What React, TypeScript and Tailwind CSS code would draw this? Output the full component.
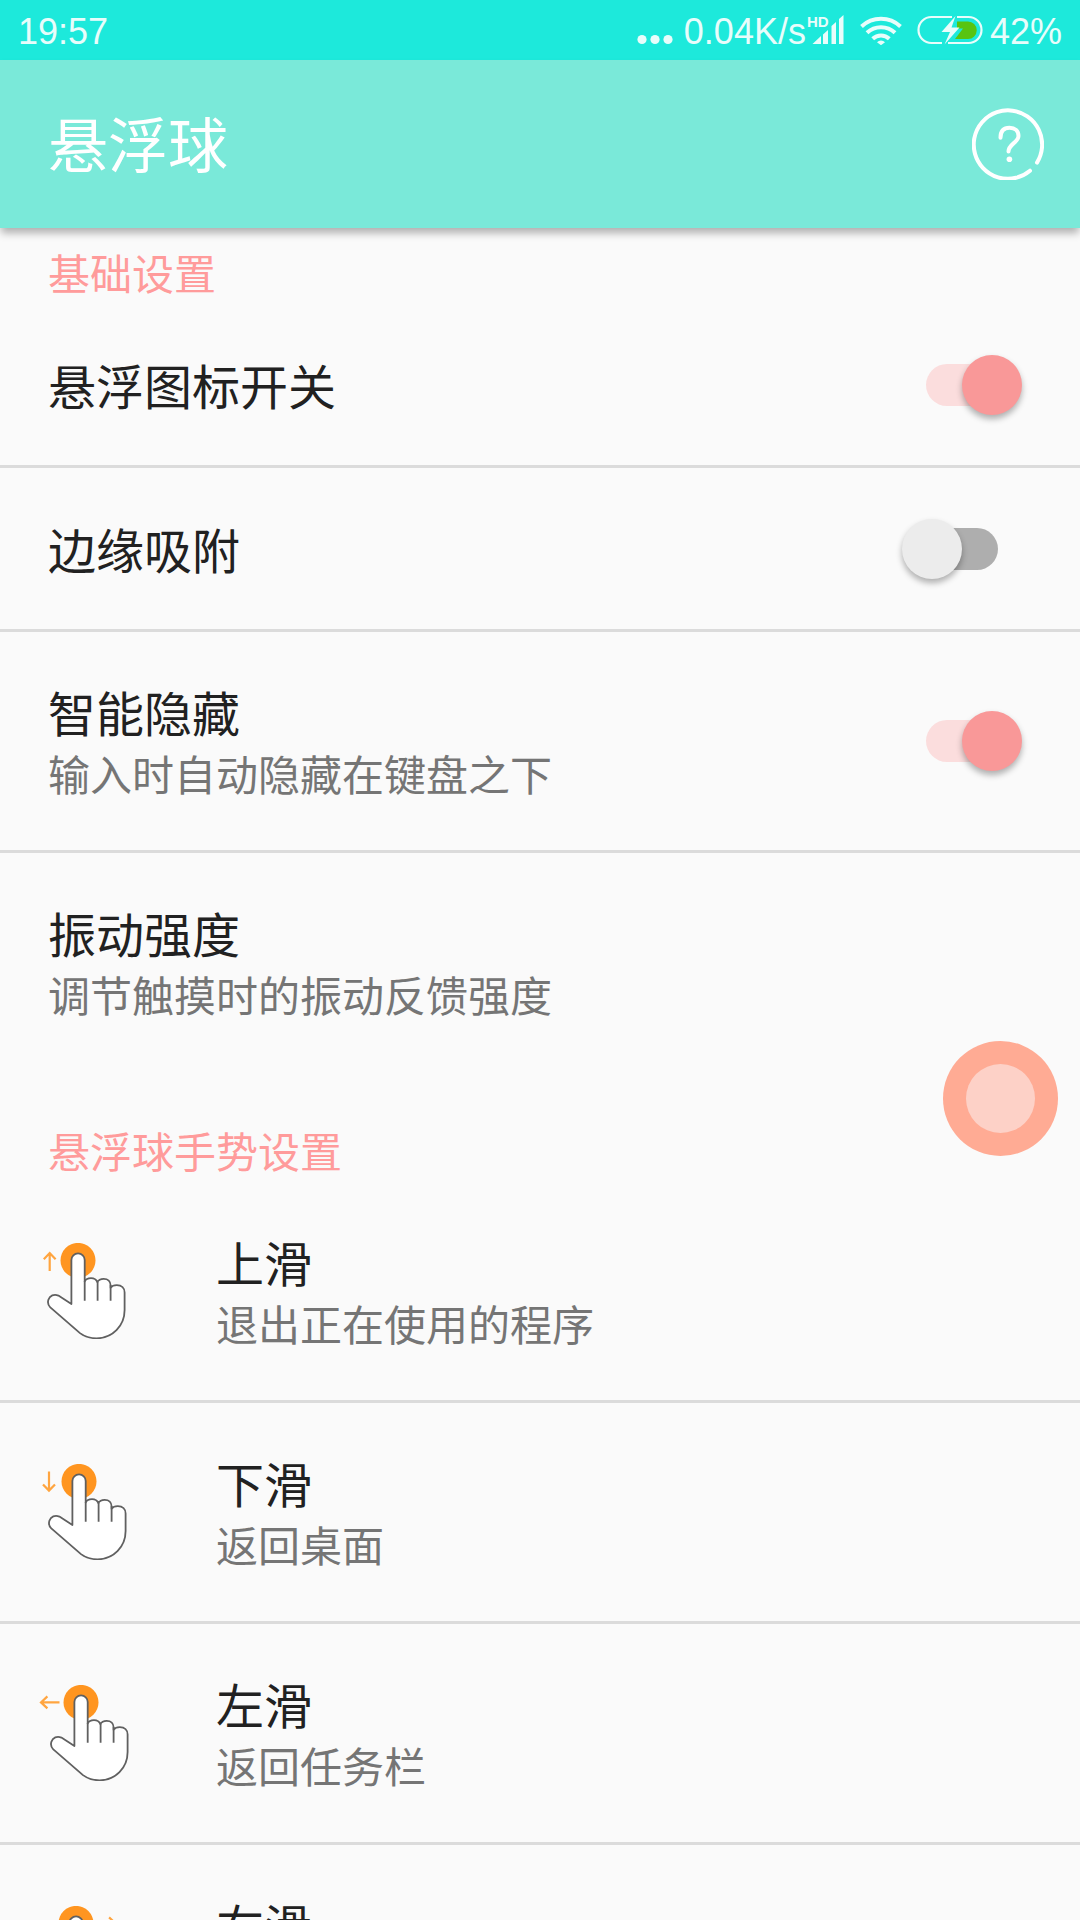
import { useState } from "react";
import clsx from "clsx";

type Direction = "up" | "down" | "left" | "right";

interface ToggleSetting {
  id: string;
  title: string;
  summary?: string;
  enabled: boolean;
}

interface Gesture {
  direction: Direction;
  title: string;
  summary: string;
}

const TOGGLES: ToggleSetting[] = [
  { id: "floating-icon", title: "悬浮图标开关", enabled: true },
  { id: "edge-snap", title: "边缘吸附", enabled: false },
  { id: "smart-hide", title: "智能隐藏", summary: "输入时自动隐藏在键盘之下", enabled: true },
];

const GESTURES: Gesture[] = [
  { direction: "up", title: "上滑", summary: "退出正在使用的程序" },
  { direction: "down", title: "下滑", summary: "返回桌面" },
  { direction: "left", title: "左滑", summary: "返回任务栏" },
  { direction: "right", title: "右滑", summary: "打开通知栏" },
];

// The hand shifts a little so that the arrow always has room beside it.
const HAND_SHIFT: Record<Direction, number> = { up: 0, down: 1, left: 3, right: -2 };

const ARROWS: Record<Direction, string> = {
  up: "M13.7 28V10M7.8 16.2l5.9-6.2 5.9 6.2",
  down: "M13 7.5V26.5M7 20.4l6 6.2 6-6.2",
  left: "M23.5 17.4H5M11.4 11.4L5 17.4l6.4 6",
  right: "M61 17.4H79.5M73.1 11.4l6.4 6-6.4 6",
};

function GestureIcon({ direction }: { direction: Direction }) {
  return (
    <svg viewBox="0 0 96 96" className="size-24 shrink-0" fill="none" aria-hidden="true">
      <g transform={`translate(${HAND_SHIFT[direction]} 0)`}>
        <circle cx="42" cy="17.4" r="17.5" fill="#ff9520" />
        <g stroke="#606060" strokeWidth="1.8">
          <path
            d="M35.4 61V17a6.65 6.65 0 0 1 13.3 0v21.5c1-2.2 3.4-3.4 6.3-3.4 3.2 0 5.4 1.6 6.4 4 1-2.1 3.2-3.3 6.3-3.3 4.2 0 6.9 2.7 6.9 6.8v2.2c1.2-1.7 3.5-2.6 6.2-2.6 4.8 0 7.8 2.8 7.8 7.4V67c0 16-12.3 28.3-28 28.3-6.2 0-12-1.8-16.6-5.2L14.3 64.4c-2.2-2.2-2.8-4.8-1.9-7.6 1.4-4.2 5.6-6 10-4.2L35.4 61z"
            fill="#fff"
            strokeLinejoin="round"
          />
          <path d="M48.7 38v19.8M61.6 39v18.8M74.6 42v15.8" />
        </g>
      </g>
      <path d={ARROWS[direction]} stroke="#ffa540" strokeWidth="2.2" />
    </svg>
  );
}

function SignalIcon() {
  return (
    <div className="relative ml-px h-8 w-[38px]">
      <span className="absolute top-0 left-0 text-[15px] leading-none font-bold">HD</span>
      <svg viewBox="0 0 38 32" className="h-8 w-[38px]" fill="currentColor" aria-hidden="true">
        <path d="M5.5 30L14 22v8zM16 20.5l5-4.5v14h-5zM24.5 12l4.5-4v22h-4.5zM32 5l4.5-4v29H32z" />
      </svg>
    </div>
  );
}

function WifiIcon() {
  return (
    <svg viewBox="0 0 42 30" className="h-[30px] w-[42px]" fill="none" aria-hidden="true">
      <g stroke="currentColor" strokeWidth="4">
        <path d="M1.5 11.5a28.5 28.5 0 0 1 39 0" />
        <path d="M7 17.8a20.3 20.3 0 0 1 28 0" />
        <path d="M12.7 23.8a12 12 0 0 1 16.6 0" />
      </g>
      <path d="M17 27.2a5.6 5.6 0 0 1 8 0L21 30.2z" fill="currentColor" />
    </svg>
  );
}

function BatteryIcon() {
  return (
    <svg viewBox="0 0 66 30" className="h-[30px] w-[66px]" fill="none" aria-hidden="true">
      <path
        d="M35 2H14.5a13 13 0 0 0 0 26H25M40 2h11.5a13 13 0 0 1 0 26H31"
        stroke="currentColor"
        strokeWidth="2.2"
      />
      <path d="M40 6.5h11a8.5 8.5 0 0 1 0 17.5H38l8-10.5h-6z" fill="#58c411" />
      <path d="M38.5 1L24.5 17h8.5L27.5 29.5 42.5 12.5h-8z" fill="currentColor" />
    </svg>
  );
}

function StatusBar() {
  return (
    <div className="flex h-[60px] shrink-0 items-center justify-between bg-[#1de9db] px-[18px] font-['Liberation_Sans',sans-serif] text-[36px] leading-none text-[#e8fdfb]">
      <span className="pt-[3px]">19:57</span>
      <div className="flex items-center">
        <svg viewBox="0 0 36 30" className="mr-[11px] h-[30px] w-9" fill="currentColor" aria-hidden="true">
          <circle cx="5" cy="24.5" r="4.6" />
          <circle cx="18" cy="24.5" r="4.6" />
          <circle cx="31" cy="24.5" r="4.6" />
        </svg>
        <span className="pt-[3px]">0.04K/s</span>
        <SignalIcon />
        <div className="mr-[7px] ml-[15px] flex gap-[15px]">
          <WifiIcon />
          <BatteryIcon />
        </div>
        <span className="pt-[3px]">42%</span>
      </div>
    </div>
  );
}

function AppHeader() {
  return (
    <header className="relative z-10 flex h-[168px] shrink-0 items-center justify-between bg-[#7ae9d9] pr-9 pl-12 text-white shadow-[0_6px_8px_-1px_rgba(0,0,0,0.3)]">
      <h1 className="pb-1 text-[60px] leading-none">悬浮球</h1>
      <button type="button" aria-label="帮助" className="size-18">
        <svg viewBox="0 0 72 72" className="size-full" fill="none" aria-hidden="true">
          <g stroke="currentColor" strokeWidth="4" strokeLinecap="round">
            <path d="M58 62.7A34.2 34.2 0 1 1 65 54.6" />
            <path d="M28.5 29.8C28.5 23 32 19.8 37.5 19.8c5.5 0 9 3.2 9 8.2 0 6.5-10 8-10 15.5" />
          </g>
          <circle cx="37.4" cy="51.3" r="2.8" fill="currentColor" />
        </svg>
      </button>
    </header>
  );
}

function SectionTitle({ children, first }: { children: string; first?: boolean }) {
  return (
    <h2
      className={clsx(
        "px-12 pb-1 text-[42px] leading-[56px] text-[#ff9b9b]",
        first ? "pt-4" : "pt-[51px]"
      )}
    >
      {children}
    </h2>
  );
}

function RowText({ title, summary }: { title: string; summary?: string }) {
  return (
    <span className="flex flex-1 flex-col text-left">
      <span className="text-[48px] leading-[63px] text-[#212121]">{title}</span>
      {summary && <span className="text-[42px] leading-[59px] text-[#757575]">{summary}</span>}
    </span>
  );
}

function ToggleRow({ setting }: { setting: ToggleSetting }) {
  const [checked, setChecked] = useState(setting.enabled);

  return (
    <label
      htmlFor={setting.id}
      className="flex min-h-[164px] items-center border-b-3 border-[#dbdbdb] py-12 pr-[58px] pl-12"
    >
      <RowText title={setting.title} summary={setting.summary} />
      <input
        id={setting.id}
        type="checkbox"
        role="switch"
        checked={checked}
        onChange={(e) => setChecked(e.target.checked)}
        className="relative mx-6 h-[42px] w-18 shrink-0 appearance-none rounded-full bg-[#aeaeae] before:absolute before:-top-[9px] before:-left-6 before:size-15 before:rounded-full before:bg-[#ececec] before:shadow-[0_4px_6px_rgba(0,0,0,0.3)] checked:bg-[#fbdddd] checked:before:left-9 checked:before:bg-[#f99898]"
      />
    </label>
  );
}

function GestureRow({ gesture }: { gesture: Gesture }) {
  return (
    <button
      type="button"
      className="flex w-full items-center gap-[84px] border-b-3 border-[#dbdbdb] py-12 pr-12 pl-9"
    >
      <GestureIcon direction={gesture.direction} />
      <RowText title={gesture.title} summary={gesture.summary} />
    </button>
  );
}

export default function App() {
  return (
    <div
      lang="zh-CN"
      className="relative flex h-screen flex-col overflow-hidden bg-[#fafafa] font-['Noto_Sans_CJK_SC',sans-serif]"
    >
      <StatusBar />
      <AppHeader />

      <main className="min-h-0 flex-1 overflow-y-auto [scrollbar-width:none]">
        <section>
          <SectionTitle first>基础设置</SectionTitle>
          {TOGGLES.map((setting) => (
            <ToggleRow key={setting.id} setting={setting} />
          ))}
          <button type="button" className="flex w-full items-center px-12 py-12">
            <RowText title="振动强度" summary="调节触摸时的振动反馈强度" />
          </button>
        </section>

        <section>
          <SectionTitle>悬浮球手势设置</SectionTitle>
          {GESTURES.map((gesture) => (
            <GestureRow key={gesture.direction} gesture={gesture} />
          ))}
        </section>
      </main>

      {/* Floating ball */}
      <button
        type="button"
        aria-label="悬浮球"
        className="absolute top-[1041px] right-[22px] flex size-[115px] items-center justify-center rounded-full bg-[#ffab94]"
      >
        <span className="size-[69px] rounded-full bg-[#fdd1c7]" />
      </button>
    </div>
  );
}
